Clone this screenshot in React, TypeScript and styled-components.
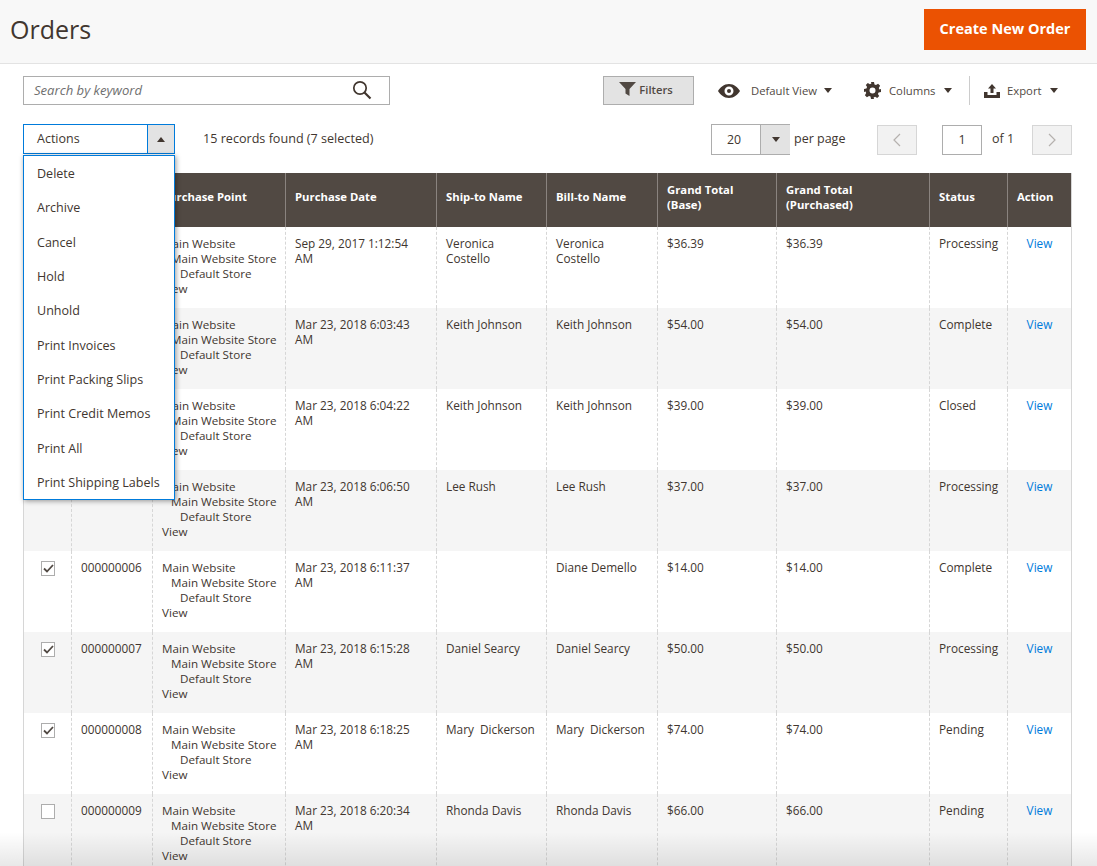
import React from "react";
import styled, { createGlobalStyle } from "styled-components";

const Global = createGlobalStyle`
  html, body { margin: 0; padding: 0; height: 866px; overflow: hidden; background: #fff; }
  body { font-family: "Open Sans", "Liberation Sans", sans-serif; font-size: 12.5px; color: #41362f; }
  * { box-sizing: border-box; }
`;

const Page = styled.div`
  position: relative;
  width: 1097px;
  height: 866px;
  overflow: hidden;
`;
const Header = styled.header`
  height: 64px;
  background: #f8f8f8;
  border-bottom: 1px solid #e3e3e3;
  display: flex;
  align-items: flex-start;
  justify-content: space-between;
  padding: 9px 11px 0 10px;
`;
const Title = styled.h1`
  margin: 0;
  font-size: 25px;
  font-weight: 400;
  line-height: 40px;
  color: #41362f;
`;
const Primary = styled.button`
  width: 162px;
  height: 41px;
  border: 0;
  padding: 0 0 2px;
  background: #eb5202;
  color: #fff;
  font: 700 14.5px "Open Sans", sans-serif;
`;
const Content = styled.div`
  position: relative;
  padding: 12px 25px 0 23px;
`;
const TopBar = styled.div`
  display: flex;
  align-items: flex-start;
  height: 29px;
`;
const Search = styled.div`
  width: 367px;
  height: 29px;
  border: 1px solid #adadad;
  display: flex;
  align-items: center;
  justify-content: space-between;
  padding: 0 17px 2px 10px;
  font-style: italic;
  font-size: 13.1px;
  color: #6f6f6f;
`;
const Filters = styled.button`
  margin-left: 213px;
  width: 91px;
  height: 29px;
  background: #e3e3e3;
  border: 1px solid #adadad;
  display: flex;
  align-items: center;
  justify-content: center;
  gap: 3px;
  padding: 0 5px 3px 0;
  color: #514943;
  font: 600 11.2px "Open Sans", sans-serif;
`;
const MenuLabel = styled.div<{ $w: number; $sep?: boolean; $pl?: number }>`
  width: ${p => p.$w}px;
  height: 29px;
  display: flex;
  align-items: center;
  font-size: 11.3px;
  color: #514943;
  padding-left: ${p => p.$pl ?? 0}px;
  ${p => p.$sep ? "border-left: 1px solid #ccc; padding-left: 14px;" : ""}
`;
const Caret = styled.span<{ $up?: boolean; $ml?: number }>`
  display: inline-block;
  width: 0;
  height: 0;
  border-left: 4px solid transparent;
  border-right: 4px solid transparent;
  ${p => p.$up ? "border-bottom: 5px solid #41362f;" : "border-top: 5px solid #41362f;"}
  margin-left: ${p => p.$ml ?? 0}px;
`;
const IconSlot = styled.span<{ $mr: number }>`
  display: inline-flex;
  margin-right: ${p => p.$mr}px;
`;
const SecondBar = styled.div`
  display: flex;
  align-items: flex-start;
  height: 49px;
  margin-top: 19px;
`;
const Actions = styled.div`
  width: 152px;
  height: 30px;
  border: 1px solid #007bdb;
  display: flex;
  align-items: stretch;
`;
const ActionsLabel = styled.div`
  flex: 1;
  padding-left: 13px;
  line-height: 27px;
  font-size: 12.5px;
`;
const ActionsToggle = styled.div`
  width: 27px;
  background: #e3e3e3;
  border-left: 1px solid #007bdb;
  display: flex;
  align-items: center;
  justify-content: center;
`;
const Records = styled.div`
  margin-left: 28px;
  line-height: 29px;
  font-size: 12.6px;
  width: 508px;
`;
const PerPage = styled.div`
  width: 79px;
  height: 31px;
  border: 1px solid #adadad;
  border-right: 0;
  display: flex;
`;
const PerValue = styled.div`
  width: 49px;
  border-right: 1px solid #adadad;
  line-height: 29px;
  text-align: center;
  font-size: 12.3px;
  padding-right: 4px;
`;
const PerToggle = styled.div`
  flex: 1;
  background: #e3e3e3;
  display: flex;
  align-items: center;
  justify-content: center;
`;
const PerText = styled.div`
  margin-left: 4px;
  width: 83px;
  line-height: 30px;
  font-size: 12.5px;
`;
const PageNav = styled.button`
  width: 40px;
  height: 30px;
  margin-top: 1px;
  background: #f2f2f2;
  border: 1px solid #d6d6d6;
  padding: 0;
  display: flex;
  align-items: center;
  justify-content: center;
`;
const PageInput = styled.div`
  margin: 1px 0 0 25px;
  width: 40px;
  height: 30px;
  border: 1px solid #adadad;
  line-height: 28px;
  text-align: center;
  font-size: 12.5px;
`;
const OfText = styled.div`
  margin-top: 1px;
  width: 50px;
  padding-left: 10px;
  line-height: 27px;
  font-size: 12.5px;
`;
const Menu = styled.ul`
  position: absolute;
  left: 23px;
  top: 91px;
  width: 152px;
  height: 345px;
  margin: 0;
  padding: 0;
  list-style: none;
  background: #fff;
  border: 1px solid #007bdb;
  box-shadow: 1px 1px 5px rgba(0, 0, 0, 0.4);
  z-index: 2;
`;
const MenuItem = styled.li`
  height: 34.35px;
  line-height: 36px;
  padding-left: 13px;
  font-size: 12.55px;
  white-space: nowrap;
`;
const Table = styled.table`
  width: 1048px;
  table-layout: fixed;
  border-collapse: collapse;
  border-left: 1px solid #d6d6d6;
  border-right: 1px solid #d6d6d6;
`;
const Th = styled.th`
  height: 54px;
  background: #514943;
  color: #fff;
  font-size: 11.3px;
  font-weight: 700;
  line-height: 15px;
  text-align: left;
  padding: 0 9px 7px;
  border-left: 1px solid #8a837f;
  &:first-child { border-left: 0; }
`;
const Row = styled.tr<{ $even: boolean }>`
  background: ${p => p.$even ? "#f5f5f5" : "#fff"};
`;
const Td = styled.td`
  height: 81px;
  vertical-align: top;
  padding: 9px 9px 0 9px;
  line-height: 15px;
  font-size: 11.8px;
  border-left: 1px dashed #d6d6d6;
  &:first-child { border-left: 0; }
`;
const NameCell = styled(Td)`
  white-space: pre-wrap;
`;
const ActionCell = styled(Td)`
  text-align: center;
`;
const CheckCell = styled(Td)`
  padding: 10px 0 0 17px;
`;
const PointCell = styled(Td)`
  font-size: 11.65px;
`;
const Box = styled.span`
  display: flex;
  align-items: center;
  justify-content: center;
  width: 14px;
  height: 15px;
  border: 1px solid #adadad;
  background: #fff;
`;
const Indent = styled.div<{ $l: number }>`
  padding-left: ${p => p.$l * 9}px;
  white-space: nowrap;
`;
const ViewLink = styled.a`
  color: #007bdb;
`;
const BottomFade = styled.div`
  position: absolute;
  left: 0;
  right: 0;
  bottom: 0;
  height: 34px;
  background: linear-gradient(to bottom, rgba(0,0,0,0), rgba(0,0,0,0.09));
  z-index: 3;
`;

const widths = [48, 81, 133, 151, 110, 111, 119, 153, 78, 64];
const heads: React.ReactNode[] = ["", "ID", "Purchase Point", "Purchase Date", "Ship-to Name", "Bill-to Name",
  <>Grand Total<br />(Base)</>, <>Grand Total<br />(Purchased)</>, "Status", "Action"];
const rows = [
  ["000000002", "Sep 29, 2017 1:12:54 AM", "Veronica Costello", "Veronica Costello", "$36.39", "Processing", true],
  ["000000003", "Mar 23, 2018 6:03:43 AM", "Keith Johnson", "Keith Johnson", "$54.00", "Complete", true],
  ["000000004", "Mar 23, 2018 6:04:22 AM", "Keith Johnson", "Keith Johnson", "$39.00", "Closed", true],
  ["000000005", "Mar 23, 2018 6:06:50 AM", "Lee Rush", "Lee Rush", "$37.00", "Processing", true],
  ["000000006", "Mar 23, 2018 6:11:37 AM", "", "Diane Demello", "$14.00", "Complete", true],
  ["000000007", "Mar 23, 2018 6:15:28 AM", "Daniel Searcy", "Daniel Searcy", "$50.00", "Processing", true],
  ["000000008", "Mar 23, 2018 6:18:25 AM", "Mary  Dickerson", "Mary  Dickerson", "$74.00", "Pending", true],
  ["000000009", "Mar 23, 2018 6:20:34 AM", "Rhonda Davis", "Rhonda Davis", "$66.00", "Pending", false],
] as const;
const menu = ["Delete", "Archive", "Cancel", "Hold", "Unhold", "Print Invoices", "Print Packing Slips", "Print Credit Memos", "Print All", "Print Shipping Labels"];

const Check = () => (
  <svg width="11" height="9" viewBox="0 0 11 9"><path d="M1 4.500 4 7.500 10 1" fill="none" stroke="#514943" strokeWidth="1.8" /></svg>
);
const Chevron = ({ left }: { left?: boolean }) => (
  <svg width="8" height="14" viewBox="0 0 8 14"><path d={left ? "M7 1 1 7l6 6" : "M1 1l6 6-6 6"} fill="none" stroke="#b5b1ae" strokeWidth="1.2" /></svg>
);

export default function App() {
  return (
    <Page>
      <Global />
      <Header>
        <Title>Orders</Title>
        <Primary>Create New Order</Primary>
      </Header>
      <Content>
        <TopBar>
          <Search>
            <span>Search by keyword</span>
            <svg width="20" height="20" viewBox="0 0 20 20"><circle cx="8" cy="8" r="6.200" fill="none" stroke="#41362f" strokeWidth="1.7" /><path d="M12.500 12.500 18.500 18.500" stroke="#41362f" strokeWidth="2.2" /></svg>
          </Search>
          <Filters>
            <svg width="17" height="14" viewBox="0 0 17 14"><path d="M0 0h17L10.500 7v7l-4-2.500V7z" fill="#514943" /></svg>
            Filters
          </Filters>
          <MenuLabel $w={169} $pl={24}>
            <IconSlot $mr={11}><svg width="22" height="14" viewBox="0 0 22 14"><path fillRule="evenodd" d="M11 0c5 0 9 3.500 11 7-2 3.500-6 7-11 7S2 10.500 0 7c2-3.500 6-7 11-7zm0 2.500a4.500 4.500 0 1 0 0 9 4.500 4.500 0 0 0 0-9zM11 5a2 2 0 1 1 0 4 2 2 0 0 1 0-4z" fill="#41362f" /></svg></IconSlot>
            Default View<Caret $ml={7} />
          </MenuLabel>
          <MenuLabel $w={106} $pl={1}>
            <IconSlot $mr={8}><svg width="17" height="17" viewBox="0 0 17 17"><path fillRule="evenodd" d="M7 0h3l.5 2.400 1.500.7 2.100-1.300 2 2-1.300 2.100.6 1.500L17 7v3l-2.400.5-.7 1.500 1.300 2.100-2 2-2.100-1.300-1.500.6L10 17H7l-.5-2.400-1.500-.7-2.100 1.300-2-2 1.300-2.100-.6-1.500L0 10V7l2.400-.5.7-1.500L1.800 2.900l2-2 2.100 1.300 1.500-.6zM8.500 5.500a3 3 0 1 0 0 6 3 3 0 0 0 0-6z" fill="#41362f" /></svg></IconSlot>
            Columns<Caret $ml={9} />
          </MenuLabel>
          <MenuLabel $w={100} $sep>
            <IconSlot $mr={7}><svg width="16" height="14" viewBox="0 0 16 14"><path d="M8 0l4 4.500H9.500V9h-3V4.500H4zM0 8h3.500v3h9V8H16v6H0z" fill="#41362f" /></svg></IconSlot>
            Export<Caret $ml={8} />
          </MenuLabel>
        </TopBar>
        <SecondBar>
          <Actions>
            <ActionsLabel>Actions</ActionsLabel>
            <ActionsToggle><Caret $up /></ActionsToggle>
          </Actions>
          <Records>15 records found (7 selected)</Records>
          <PerPage>
            <PerValue>20</PerValue>
            <PerToggle><Caret /></PerToggle>
          </PerPage>
          <PerText>per page</PerText>
          <PageNav><Chevron left /></PageNav>
          <PageInput>1</PageInput>
          <OfText>of 1</OfText>
          <PageNav><Chevron /></PageNav>
        </SecondBar>
        <Menu>
          {menu.map(m => <MenuItem key={m}>{m}</MenuItem>)}
        </Menu>
        <Table>
          <colgroup>
            {widths.map((w, i) => <col key={i} style={{ width: w }} />)}
          </colgroup>
          <thead>
            <tr>{heads.map((h, i) => <Th key={i}>{h}</Th>)}</tr>
          </thead>
          <tbody>
            {rows.map((r, i) => (
              <Row key={r[0]} $even={i % 2 === 1}>
                <CheckCell><Box>{r[6] && <Check />}</Box></CheckCell>
                <Td>{r[0]}</Td>
                <PointCell>
                  <Indent $l={0}>Main Website</Indent>
                  <Indent $l={1}>Main Website Store</Indent>
                  <Indent $l={2}>Default Store</Indent>
                  <Indent $l={0}>View</Indent>
                </PointCell>
                <Td>{r[1]}</Td>
                <NameCell>{r[2]}</NameCell>
                <NameCell>{r[3]}</NameCell>
                <Td>{r[4]}</Td>
                <Td>{r[4]}</Td>
                <Td>{r[5]}</Td>
                <ActionCell><ViewLink>View</ViewLink></ActionCell>
              </Row>
            ))}
          </tbody>
        </Table>
      </Content>
      <BottomFade />
    </Page>
  );
}
